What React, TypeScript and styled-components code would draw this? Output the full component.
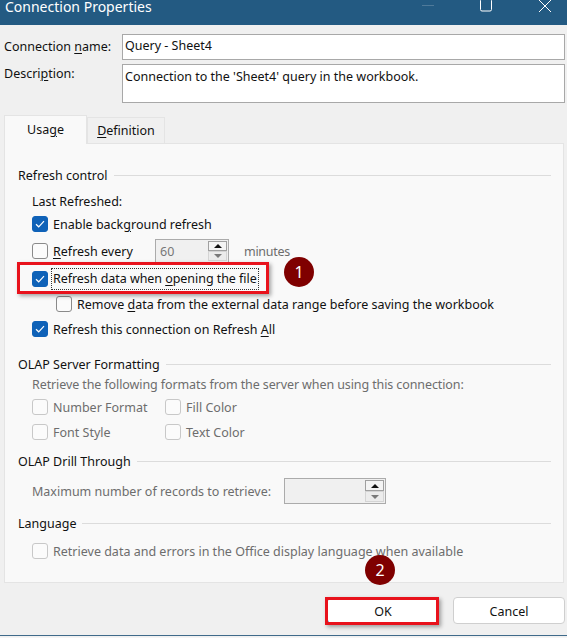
import React from "react";
import styled, { createGlobalStyle } from "styled-components";

const Global = createGlobalStyle`
  html, body { margin: 0; padding: 0; background: #f1f1f1; }
  body { font-family: "Noto Sans", "Open Sans", sans-serif; font-size: 12.5px; color: #111; }
`;

const Window = styled.div`
  position: relative;
  width: 567px;
  height: 638px;
  overflow: hidden;
  display: flex;
  flex-direction: column;
  background: #f0f0f0;
  border-bottom: 1px solid #f5f5f5;
  box-sizing: border-box;
`;

const TitleBar = styled.div`
  height: 25px;
  flex: none;
  background: #235a82;
  color: #fff;
  display: flex;
  align-items: flex-start;
  padding-left: 5px;
  font-size: 14px;
  line-height: 14px;
`;

const TitleText = styled.span`
  flex: 1;
`;

const WinButton = styled.svg<{ $mr: number }>`
  display: block;
  margin-right: ${(p) => p.$mr}px;
`;

const Form = styled.div`
  display: grid;
  grid-template-columns: 118px 443px;
  column-gap: 0;
  row-gap: 4px;
  padding: 9px 2px 0 4px;
`;

const FieldLabel = styled.label<{ $h: number }>`
  height: ${(p) => p.$h}px;
  line-height: ${(p) => p.$h}px;
`;

const TextBox = styled.div<{ $h: number; $pt: number }>`
  height: ${(p) => p.$h}px;
  box-sizing: border-box;
  border: 1px solid #a8a8a8;
  background: #fff;
  padding: ${(p) => p.$pt}px 2px 0;
  line-height: 16px;
  color: #111;
`;

const Tabs = styled.div`
  display: flex;
  align-items: flex-end;
  margin: 12px 0 0 4px;
  height: 28px;
`;

const Tab = styled.div<{ $active?: boolean; $w: number }>`
  width: ${(p) => p.$w}px;
  height: ${(p) => (p.$active ? 29 : 26)}px;
  box-sizing: border-box;
  border: 1px solid #e4e4e4;
  border-bottom: none;
  background: ${(p) => (p.$active ? "#f9f9f9" : "#f0f0f0")};
  display: flex;
  align-items: center;
  justify-content: center;
  position: relative;
  z-index: ${(p) => (p.$active ? 1 : 0)};
  margin-bottom: ${(p) => (p.$active ? -1 : 0)}px;
  padding-bottom: ${(p) => (p.$active ? 2 : 1)}px;
`;

const Panel = styled.div`
  width: 560px;
  height: 440px;
  margin-left: 4px;
  box-sizing: border-box;
  border: 1px solid #e4e4e4;
  background: #f9f9f9;
  padding: 23px 12px 0 13px;
`;

const Section = styled.div<{ $mt?: number }>`
  margin-top: ${(p) => p.$mt ?? 0}px;
`;

const Header = styled.div`
  display: flex;
  align-items: center;
  height: 16px;
  gap: 6px;
  &::after {
    content: "";
    flex: 1;
    height: 1px;
    background: #dcdcdc;
  }
`;

const Row = styled.div<{ $h: number; $indent?: number; $disabled?: boolean; $mt?: number }>`
  height: ${(p) => p.$h}px;
  display: flex;
  align-items: center;
  padding-left: ${(p) => p.$indent ?? 14}px;
  margin-top: ${(p) => p.$mt ?? 0}px;
  color: ${(p) => (p.$disabled ? "#6d6d6d" : "#111")};
`;

const Box = styled.span<{ $on?: boolean; $disabled?: boolean }>`
  width: 16px;
  height: 16px;
  flex: none;
  box-sizing: border-box;
  border-radius: 3px;
  border: 1px solid ${(p) => (p.$on ? "#0f62b8" : p.$disabled ? "#c8c8c8" : "#8a8a8a")};
  background: ${(p) => (p.$on ? "#0f62b8" : "#fbfbfb")};
  margin-right: 5px;
  display: flex;
  align-items: center;
  justify-content: center;
`;

const Check = ({ on, disabled }: { on?: boolean; disabled?: boolean }) => (
  <Box $on={on} $disabled={disabled}>
    {on && (
      <svg width="10" height="8" viewBox="0 0 10 8">
        <path d="M1 4.2 L3.7 6.8 L9 1.2" fill="none" stroke="#fff" strokeWidth="1.2" />
      </svg>
    )}
  </Box>
);

const U = styled.span`
  text-decoration: underline;
  text-underline-offset: 2px;
  text-decoration-thickness: 1px;
`;

const Focus = styled.span`
  outline: 1px dotted #333;
  margin-left: -1px;
  padding: 1px 1px 2px;
  letter-spacing: -0.05px;
`;

const TightText = styled.span`
  letter-spacing: -0.1px;
`;

const EveryLabel = styled.span`
  width: 102px;
  flex: none;
`;

const Spin = styled.div<{ $w: number; $ml: number; $h: number }>`
  width: ${(p) => p.$w}px;
  height: ${(p) => p.$h}px;
  margin-left: ${(p) => p.$ml}px;
  box-sizing: border-box;
  border: 1px solid #ababab;
  background: #f0f0f0;
  display: flex;
  align-items: center;
  justify-content: space-between;
  padding: 1px;
  color: #777;
  flex: none;
`;

const SpinValue = styled.span`
  padding-left: 3px;
`;

const SpinButtons = styled.div`
  width: 19px;
  height: 100%;
  display: flex;
  flex-direction: column;
`;

const SpinBtn = styled.div<{ $down?: boolean }>`
  flex: 1;
  box-sizing: border-box;
  border: 1px solid ${(p) => (p.$down ? "#d4d4d4" : "#a0a0a0")};
  background: ${(p) => (p.$down ? "#ececec" : "#f4f4f4")};
  display: flex;
  align-items: center;
  justify-content: center;
  &::before {
    content: "";
    width: 0;
    height: 0;
    border-left: 4px solid transparent;
    border-right: 4px solid transparent;
    ${(p) => (p.$down ? "border-top: 4px solid #7a7a7a;" : "border-bottom: 4px solid #111;")}
  }
`;

const Spinner = ({ value, w, ml, h }: { value?: string; w: number; ml: number; h: number }) => (
  <Spin $w={w} $ml={ml} $h={h}>
    <SpinValue>{value}</SpinValue>
    <SpinButtons>
      <SpinBtn />
      <SpinBtn $down />
    </SpinButtons>
  </Spin>
);

const Minutes = styled.span`
  margin-left: 15px;
  color: #6d6d6d;
  letter-spacing: -0.3px;
`;

const CheckCol = styled.span`
  width: 133px;
  display: flex;
  align-items: center;
`;

const Footer = styled.div`
  display: flex;
  justify-content: flex-end;
  gap: 14px;
  padding: 14px 2px 0 0;
`;

const Btn = styled.div<{ $primary?: boolean }>`
  width: 112px;
  height: 27px;
  box-sizing: border-box;
  background: #fff;
  border: 1px solid ${(p) => (p.$primary ? "#0f62b8" : "#cfcfcf")};
  border-radius: 4px;
  display: flex;
  align-items: center;
  justify-content: center;
  padding-top: 1px;
`;

const BottomEdge = styled.div`
  position: absolute;
  left: 0;
  right: 0;
  top: 635px;
  height: 1px;
  background: #3f6a8a;
`;

const Callout = styled.div<{ $x: number; $y: number; $w: number; $h: number }>`
  position: absolute;
  left: ${(p) => p.$x}px;
  top: ${(p) => p.$y}px;
  width: ${(p) => p.$w}px;
  height: ${(p) => p.$h}px;
  box-sizing: border-box;
  border: 3px solid #e8121c;
  box-shadow: 2px 2px 4px rgba(0, 0, 0, 0.35);
  pointer-events: none;
`;

const Badge = styled.div<{ $x: number; $y: number }>`
  position: absolute;
  left: ${(p) => p.$x}px;
  top: ${(p) => p.$y}px;
  width: 30px;
  height: 30px;
  border-radius: 50%;
  background: #7f0000;
  color: #fff;
  font-size: 16px;
  display: flex;
  align-items: center;
  justify-content: center;
`;

export default function App() {
  return (
    <Window>
      <Global />
      <TitleBar>
        <TitleText>Connection Properties</TitleText>
        <WinButton $mr={46} width="12" height="12" viewBox="0 0 12 12">
          <path d="M0 5.5 H12" stroke="#4f7a9a" strokeWidth="1" />
        </WinButton>
        <WinButton $mr={47} width="12" height="12" viewBox="0 0 12 12">
          <rect x="0.5" y="-1" width="11" height="12" rx="1.5" fill="none" stroke="#fff" />
        </WinButton>
        <WinButton $mr={16} width="12" height="12" viewBox="0 0 12 12">
          <path d="M0 0 L12 12 M12 0 L0 12" stroke="#fff" strokeWidth="1" />
        </WinButton>
      </TitleBar>

      <Form>
        <FieldLabel $h={26}>
          Connection <U>n</U>ame:
        </FieldLabel>
        <TextBox $h={26} $pt={3}>Query - Sheet4</TextBox>
        <FieldLabel $h={20}>
          Descri<U>p</U>tion:
        </FieldLabel>
        <TextBox $h={39} $pt={4}>Connection to the 'Sheet4' query in the workbook.</TextBox>
      </Form>

      <Tabs>
        <Tab $active $w={83}>
          <span>
            Usa<U>g</U>e
          </span>
        </Tab>
        <Tab $w={78}>
          <span>
            <U>D</U>efinition
          </span>
        </Tab>
      </Tabs>

      <Panel>
        <Section>
          <Header>Refresh control</Header>
          <Row $h={20} $mt={8}>Last Refreshed:</Row>
          <Row $h={26}>
            <Check on />
            <span>
              Enable back<U>g</U>round refresh
            </span>
          </Row>
          <Row $h={28}>
            <Check />
            <EveryLabel>
              <U>R</U>efresh every
            </EveryLabel>
            <Spinner value="60" w={74} ml={0} h={24} />
            <Minutes>minutes</Minutes>
          </Row>
          <Row $h={28}>
            <Check on />
            <Focus>
              Refresh data when <U>o</U>pening the file
            </Focus>
          </Row>
          <Row $h={22} $indent={38}>
            <Check />
            <span>
              Remove <U>d</U>ata from the external data range before saving the workbook
            </span>
          </Row>
          <Row $h={28}>
            <Check on />
            <span>
              Refresh this connection on Refresh <U>A</U>ll
            </span>
          </Row>
        </Section>

        <Section $mt={13}>
          <Header>OLAP Server Formatting</Header>
          <Row $h={24} $disabled>
            <TightText>Retrieve the following formats from the server when using this connection:</TightText>
          </Row>
          <Row $h={22} $disabled>
            <CheckCol>
              <Check disabled />
              Number Format
            </CheckCol>
            <CheckCol>
              <Check disabled />
              Fill Color
            </CheckCol>
          </Row>
          <Row $h={28} $disabled>
            <CheckCol>
              <Check disabled />
              Font Style
            </CheckCol>
            <CheckCol>
              <Check disabled />
              Text Color
            </CheckCol>
          </Row>
        </Section>

        <Section $mt={7}>
          <Header>OLAP Drill Through</Header>
          <Row $h={44} $disabled>
            <span>Maximum number of records to retrieve:</span>
            <Spinner w={102} ml={13} h={26} />
          </Row>
        </Section>

        <Section $mt={2}>
          <Header>Language</Header>
          <Row $h={40} $disabled>
            <Check disabled />
            Retrieve data and errors in the Office display language when available
          </Row>
        </Section>
      </Panel>

      <Footer>
        <Btn $primary>OK</Btn>
        <Btn>Cancel</Btn>
      </Footer>
      <BottomEdge />

      <Callout $x={17} $y={262} $w={252} $h={32} />
      <Badge $x={284} $y={257}>1</Badge>
      <Callout $x={325} $y={597} $w={114} $h={28} />
      <Badge $x={365} $y={555}>2</Badge>
    </Window>
  );
}
